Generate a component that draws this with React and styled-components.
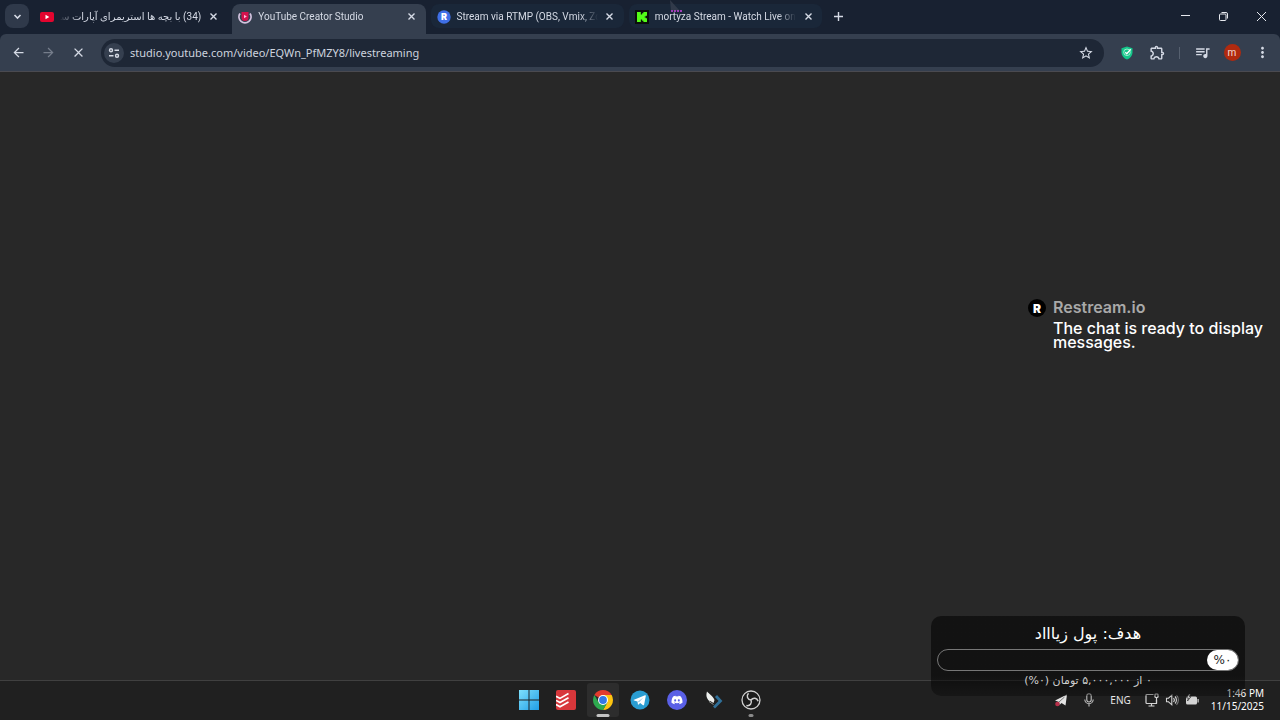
import styled, { createGlobalStyle, css } from 'styled-components'
import { FaDiscord } from 'react-icons/fa'
import {
  MdArrowBack,
  MdArrowForward,
  MdClose,
  MdMoreVert,
  MdOutlineExtension,
  MdOutlineQueueMusic,
  MdStarBorder,
} from 'react-icons/md'

const uiFont = "'Noto Sans', 'Open Sans', 'DejaVu Sans', sans-serif"
const tabFont = "Roboto, 'Noto Sans', 'DejaVu Sans', sans-serif"

const tabs = [
  { id: 'aparat', title: '(34) با بچه ها استریمرای آپارات سر', icon: YouTubeIcon, rtl: true },
  { id: 'studio', title: 'YouTube Creator Studio', icon: StudioIcon, active: true },
  { id: 'rtmp', title: 'Stream via RTMP (OBS, Vmix, Zo', icon: RestreamIcon, tinted: true },
  { id: 'kick', title: 'mortyza Stream - Watch Live on', icon: KickIcon, tinted: true },
]

const apps = [
  { name: 'Start', icon: StartIcon },
  { name: 'Todoist', icon: TodoistIcon },
  { name: 'Chrome', icon: ChromeIcon, state: 'focused' },
  { name: 'Telegram', icon: TelegramIcon },
  { name: 'Discord', icon: DiscordIcon },
  { name: 'Wing', icon: WingIcon },
  { name: 'OBS Studio', icon: ObsIcon, state: 'open' },
]

function App() {
  return (
    <>
      <GlobalStyle />
      <Desktop>
        <TabStrip>
          <SearchTabs aria-label="Search tabs">
            <ChevronIcon />
          </SearchTabs>
          <TabList>
            {tabs.map((tab) => (
              <BrowserTab key={tab.id} tab={tab} />
            ))}
          </TabList>
          <NewTab aria-label="New tab">
            <PlusIcon />
          </NewTab>
          <WindowControls>
            <WindowButton aria-label="Minimize">
              <svg width="11" height="11" viewBox="0 0 11 11"><path d="M1 4.500h9" stroke="currentColor" /></svg>
            </WindowButton>
            <WindowButton aria-label="Restore">
              <svg width="11" height="11" viewBox="0 0 11 11" fill="none" stroke="currentColor">
                <rect x="1.5" y="3" width="6.5" height="6.5" rx="1" />
                <path d="M3.5 1.5H8A1.5 1.5 0 0 1 9.5 3v4.5" />
              </svg>
            </WindowButton>
            <WindowButton aria-label="Close">
              <svg width="11" height="11" viewBox="0 0 11 11"><path d="M1 1l9 9M10 1l-9 9" stroke="currentColor" /></svg>
            </WindowButton>
          </WindowControls>
        </TabStrip>

        <Toolbar>
          <ToolButton aria-label="Back"><MdArrowBack size={15} /></ToolButton>
          <ToolButton aria-label="Forward" disabled><MdArrowForward size={15} /></ToolButton>
          <ToolButton aria-label="Stop"><MdClose size={15} /></ToolButton>
          <AddressBar>
            <SiteInfo aria-label="Site information">
              <TuneIcon />
            </SiteInfo>
            <Address
              aria-label="Address"
              spellCheck={false}
              defaultValue="studio.youtube.com/video/EQWn_PfMZY8/livestreaming"
            />
            <Bookmark aria-label="Bookmark this tab"><MdStarBorder size={16} /></Bookmark>
          </AddressBar>
          <Extensions>
            <ToolButton aria-label="Shield"><ShieldIcon /></ToolButton>
            <ToolButton aria-label="Extensions"><MdOutlineExtension size={17} /></ToolButton>
            <Divider />
            <ToolButton aria-label="Media controls"><MdOutlineQueueMusic size={17} /></ToolButton>
            <ToolButton aria-label="Profile"><Avatar>m</Avatar></ToolButton>
            <ToolButton aria-label="Menu"><MdMoreVert size={17} /></ToolButton>
          </Extensions>
        </Toolbar>

        <Page>
          <Chat>
            <ChatLogo>R</ChatLogo>
            <div>
              <ChatAuthor>Restream.io</ChatAuthor>
              <ChatText>The chat is ready to display messages.</ChatText>
            </div>
          </Chat>
        </Page>

        <Taskbar>
          <Apps>
            {apps.map(({ name, icon: Icon, state }) => (
              <AppButton key={name} aria-label={name} $state={state}>
                <Icon />
              </AppButton>
            ))}
          </Apps>
          <Tray>
            <TrayButton aria-label="Telegram"><TrayPlaneIcon /></TrayButton>
            <TrayButton aria-label="Microphone"><MicIcon /></TrayButton>
            <TrayButton aria-label="Input language">ENG</TrayButton>
            <QuickSettings aria-label="Quick settings">
              <NetworkIcon />
              <SpeakerIcon />
              <BatteryIcon />
            </QuickSettings>
            <Clock>
              <span>1:46 PM</span>
              <span>11/15/2025</span>
            </Clock>
          </Tray>
        </Taskbar>

        <Goal dir="rtl">
          <GoalTitle>هدف: پول زیاااد</GoalTitle>
          <GoalTrack>
            <GoalFill>%۰</GoalFill>
          </GoalTrack>
          <GoalAmount>۰ از ۵,۰۰۰,۰۰۰ تومان (۰%)</GoalAmount>
        </Goal>

        <Pointer width="16" height="20" viewBox="0 0 16 20" aria-hidden="true">
          <path d="M3 0l10 11H4z" fill="#3a4250" opacity=".75" />
          <path d="M4 11h11" stroke="#a03cb8" strokeWidth="2" strokeDasharray="2 1" />
        </Pointer>
      </Desktop>
    </>
  )
}

function BrowserTab({ tab }) {
  const Icon = tab.icon
  return (
    <Tab $active={tab.active} $tinted={tab.tinted}>
      <TabLink href="#">
        <Icon />
        <TabTitle $rtl={tab.rtl} dir={tab.rtl ? 'rtl' : 'ltr'}>{tab.title}</TabTitle>
      </TabLink>
      <CloseTab aria-label="Close tab">
        <svg width="9" height="9" viewBox="0 0 9 9"><path d="M1.500 1.500l6 6M7.500 1.500l-6 6" stroke="currentColor" strokeWidth="1.4" /></svg>
      </CloseTab>
    </Tab>
  )
}

function ChevronIcon() {
  return (
    <svg width="9" height="9" viewBox="0 0 9 9" fill="none">
      <path d="M1.5 3l3 3 3-3" stroke="currentColor" strokeWidth="1.6" />
    </svg>
  )
}

function PlusIcon() {
  return (
    <svg width="11" height="11" viewBox="0 0 11 11">
      <path d="M5.5 1v9M1 5.5h9" stroke="currentColor" strokeWidth="1.4" />
    </svg>
  )
}

function YouTubeIcon() {
  return (
    <svg width="14" height="14" viewBox="0 0 14 14">
      <rect y="2" width="14" height="10" rx="2" fill="#e3052f" />
      <path d="M5.5 4.8v4.4L9.3 7z" fill="#fff" />
    </svg>
  )
}

function StudioIcon() {
  return (
    <svg width="14" height="14" viewBox="0 0 14 14">
      <path d="M3.500 2h7v5.500a3.500 3.500 0 0 1-7 0z" fill="#d3124c" />
      <path d="M6 4.800v3.400L8.800 6.500z" fill="#fbd" />
      <path d="M2 3.500A6 6 0 1 0 12 3.500" fill="none" stroke="#d3c3df" strokeWidth="1.800" />
    </svg>
  )
}

function RestreamIcon() {
  return (
    <svg width="14" height="14" viewBox="0 0 14 14">
      <circle cx="7" cy="7" r="6.700" fill="#3f6fe6" />
      <text x="7" y="10.200" textAnchor="middle" fontFamily="Inter, sans-serif" fontSize="9" fontWeight="900" fill="#fff">R</text>
    </svg>
  )
}

function KickIcon() {
  return (
    <svg width="14" height="14" viewBox="0 0 14 14">
      <rect width="14" height="14" fill="#0b0f0c" />
      <path d="M2 2h3.800v2.400h1.300V3.200h1.300V2H12v3.700h-1.200v.8H9.700v1h1.100v.8H12V12H8.400v-1.200H7.100V9.600H5.800V12H2z" fill="#53fc18" />
    </svg>
  )
}

function TuneIcon() {
  return (
    <svg width="12" height="12" viewBox="0 0 12 12" fill="none" stroke="currentColor" strokeWidth="1.400">
      <circle cx="3" cy="3.200" r="1.500" />
      <path d="M6.500 3.200H11M1 8.800h4.500" />
      <circle cx="9" cy="8.800" r="1.500" />
    </svg>
  )
}

function ShieldIcon() {
  return (
    <svg width="14" height="14" viewBox="0 0 14 14">
      <path d="M7 .5l5.500 1.700v4.300c0 3.400-2.300 5.800-5.500 7-3.200-1.200-5.500-3.600-5.500-7V2.200z" fill="#14c68a" />
      <circle cx="7" cy="6.300" r="3.300" fill="none" stroke="#a9f0d5" strokeWidth=".9" />
      <path d="M5.300 6.200l1.500 1.600 3.900-4.500" fill="none" stroke="#fff" strokeWidth="1.300" />
    </svg>
  )
}

function StartIcon() {
  return (
    <svg width="20" height="20" viewBox="0 0 20 20">
      <defs>
        <linearGradient id="start" x1="0" y1="0" x2="1" y2="1">
          <stop stopColor="#7fe0fb" />
          <stop offset="1" stopColor="#1f9de6" />
        </linearGradient>
      </defs>
      <path d="M0 0h9.500v9.500H0zM10.500 0H20v9.500h-9.500zM0 10.500h9.500V20H0zM10.500 10.500H20V20h-9.500z" fill="url(#start)" />
    </svg>
  )
}

function TodoistIcon() {
  return (
    <svg width="20" height="20" viewBox="0 0 20 20">
      <rect width="20" height="20" rx="2" fill="#d8373b" />
      <path d="M0 6.200l4 2.200 8.500-4.800M0 10.400l4 2.200 8.500-4.800M0 14.600l4 2.200 8.500-4.800" fill="none" stroke="#fff" strokeWidth="1.700" />
    </svg>
  )
}

function ChromeIcon() {
  return (
    <svg width="20" height="20" viewBox="0 0 20 20">
      <path d="M10 10L1.340 5A10 10 0 0 1 18.660 5z" fill="#e33b2e" />
      <path d="M10 5h8.660A10 10 0 0 1 10 20l4.330-7.500z" fill="#fdc411" />
      <path d="M1.340 5A10 10 0 0 0 10 20l4.330-7.500H5.670z" fill="#2da94f" />
      <circle cx="10" cy="10" r="5" fill="#fff" />
      <circle cx="10" cy="10" r="3.900" fill="#3478e5" />
    </svg>
  )
}

function TelegramIcon() {
  return (
    <svg width="20" height="20" viewBox="0 0 20 20">
      <circle cx="10" cy="10" r="9.500" fill="#2a9dd2" />
      <path d="M4 9.800l11-4.500c.6-.2 1 .1.800.8l-1.700 8.600c-.1.600-.6.800-1.100.5l-2.900-2.200-1.600 1.500c-.3.300-.6.200-.6-.2l-.4-2.900-3.400-1c-.6-.2-.6-.5-.1-.6z" fill="#fff" />
      <path d="M7.800 11.600l5.600-4.100-4.400 4.900z" fill="#9ccde6" />
    </svg>
  )
}

function DiscordIcon() {
  return (
    <svg width="20" height="20" viewBox="0 0 20 20">
      <circle cx="10" cy="10" r="10" fill="#5a60e6" />
      <FaDiscord x="4" y="4" size={12} color="#fff" />
    </svg>
  )
}

function WingIcon() {
  return (
    <svg width="20" height="20" viewBox="0 0 20 20">
      <path d="M12 6l4.500 5-6.500 6.500" fill="none" stroke="#2f6f98" strokeWidth="2.800" />
      <path d="M3 1.500c1.500 2 6 4.500 7.500 8.500L9.500 13 5.500 10.500 6.500 12C3 9.500 1.500 6 3 1.500z" fill="#eef0ee" />
      <path d="M5 11.500l4.500 3" stroke="#8d9290" />
    </svg>
  )
}

function ObsIcon() {
  return (
    <svg width="20" height="20" viewBox="0 0 20 20" fill="none" stroke="#d0d0d0">
      <circle cx="10" cy="10" r="9" fill="#1b1b1b" strokeWidth="1.300" />
      <g strokeWidth="1.500">
        <path d="M10 10C6.500 9.500 5 6 7.500 3.200" />
        <path d="M10 10C6.500 9.500 5 6 7.500 3.200" transform="rotate(120 10 10)" />
        <path d="M10 10C6.500 9.500 5 6 7.500 3.200" transform="rotate(240 10 10)" />
      </g>
    </svg>
  )
}

function TrayPlaneIcon() {
  return (
    <svg width="14" height="14" viewBox="0 0 14 14">
      <path d="M1 7.500L13 1.500l-1.500 11-4-2.500-2 2-.5-3z" fill="#e4e4e4" />
      <path d="M5 9l5.500-5" stroke="#777" />
      <circle cx="3.500" cy="11" r="2.300" fill="#b8304a" />
    </svg>
  )
}

function MicIcon() {
  return (
    <svg width="14" height="14" viewBox="0 0 14 14" fill="none" stroke="#c0c0c0" strokeWidth="1.100">
      <rect x="4.800" y=".8" width="4.400" height="8.200" rx="2.200" />
      <path d="M2.800 6.500a4.200 4.200 0 0 0 8.400 0M7 10.800V13.500" />
    </svg>
  )
}

function NetworkIcon() {
  return (
    <svg width="14" height="14" viewBox="0 0 14 14" fill="none" stroke="#d4d4d4" strokeWidth="1.200">
      <path d="M8.500 1.500H2A1 1 0 0 0 1 2.500v7a1 1 0 0 0 1 1h9.500V7M3.500 13h6M6.500 10.500V13" />
      <rect x="10" y="1" width="3" height="3.500" rx=".8" />
      <path d="M11.500 4.500V10" />
    </svg>
  )
}

function SpeakerIcon() {
  return (
    <svg width="14" height="14" viewBox="0 0 14 14" fill="none" stroke="#d4d4d4" strokeWidth="1.100">
      <path d="M1.500 5.200h2L6.800 2.200v9.600L3.500 8.800h-2z" />
      <path d="M8.500 5a3 3 0 0 1 0 4M10 3.500a5 5 0 0 1 0 7" />
      <path d="M11.500 2.200a7 7 0 0 1 0 9.600" opacity=".5" />
    </svg>
  )
}

function BatteryIcon() {
  return (
    <svg width="14" height="14" viewBox="0 0 14 14">
      <rect x="1" y="3.500" width="11" height="8" rx="1.500" fill="#d4d4d4" />
      <path d="M12.500 6h1.200v3.500h-1.200z" fill="#d4d4d4" />
      <path d="M3.800 1L1.500 5h2L2.500 8l3.500-4.300H4.200L5.800 1z" fill="#d4d4d4" stroke="#222" strokeWidth=".7" />
    </svg>
  )
}

const GlobalStyle = createGlobalStyle`
  * {
    box-sizing: border-box;
  }
  body {
    margin: 0;
    background: #282828;
    font-family: ${uiFont};
  }
  button {
    padding: 0;
    border: 0;
    background: none;
    color: inherit;
    font: inherit;
  }
  svg {
    display: block;
    flex-shrink: 0;
  }
`

const Desktop = styled.div`
  position: relative;
  display: flex;
  flex-direction: column;
  min-height: 100vh;
  overflow: hidden;
  background: #182131;
`

const TabStrip = styled.header`
  display: flex;
  align-items: flex-start;
  height: 34px;
  padding: 4px 0 0 5px;
  color: #d5dae5;
`

const SearchTabs = styled.button`
  display: grid;
  place-items: center;
  flex-shrink: 0;
  width: 24px;
  height: 24px;
  margin-right: 5px;
  border-radius: 8px;
  background: #2f394a;
`

const TabList = styled.nav`
  display: flex;
  flex: 0 1 788px;
  gap: 5px;
  min-width: 0;
`

const Tab = styled.div`
  display: flex;
  flex: 1;
  align-items: flex-start;
  min-width: 0;
  height: ${({ $active }) => ($active ? '30px' : '24px')};
  padding: 0 5px 0 6px;
  border-radius: ${({ $active }) => ($active ? '8px 8px 0 0' : '8px')};
  background: ${({ $active, $tinted }) => ($active ? '#353f4f' : $tinted ? '#1a2739' : 'none')};
`

const TabLink = styled.a`
  display: flex;
  flex: 1;
  align-items: center;
  gap: 6px;
  min-width: 0;
  height: 25px;
  color: #d5dae5;
  text-decoration: none;
`

const TabTitle = styled.span`
  flex: 1;
  overflow: hidden;
  white-space: nowrap;
  font-family: ${tabFont};
  font-size: 10px;
  line-height: 20px;
  ${({ $rtl }) => css`
    mask-image: linear-gradient(to ${$rtl ? 'left' : 'right'}, #000 calc(100% - 18px), transparent);
  `}
`

const CloseTab = styled.button`
  display: grid;
  place-items: center;
  width: 18px;
  height: 25px;
  margin-left: 3px;
`

const NewTab = styled.button`
  display: grid;
  place-items: center;
  width: 24px;
  height: 25px;
  margin-left: 4px;
`

const WindowControls = styled.div`
  display: flex;
  margin-left: auto;
`

const WindowButton = styled.button`
  display: grid;
  place-items: center;
  width: 38px;
  height: 25px;
  color: #e6e9ef;
`

const Toolbar = styled.div`
  display: flex;
  align-items: center;
  height: 38px;
  padding: 0 3px;
  border-bottom: 1px solid #4a4a50;
  border-radius: 6px 6px 0 0;
  background: #353f4f;
  color: #d5dae5;
`

const ToolButton = styled.button`
  display: grid;
  place-items: center;
  width: 30px;
  height: 28px;
  &:disabled {
    opacity: 0.4;
  }
`

const AddressBar = styled.div`
  display: flex;
  flex: 1;
  align-items: center;
  height: 28px;
  margin-left: 8px;
  padding: 0 8px 0 3px;
  border-radius: 14px;
  background: #1e2736;
`

const SiteInfo = styled.button`
  display: grid;
  place-items: center;
  width: 20px;
  height: 20px;
  border-radius: 10px;
  background: #353f4f;
`

const Address = styled.input`
  flex: 1;
  min-width: 0;
  height: 24px;
  padding: 0;
  margin-left: 6px;
  border: 0;
  outline: 0;
  background: none;
  color: #cdd3df;
  font-family: ${uiFont};
  font-size: 11px;
`

const Bookmark = styled.button`
  display: grid;
  place-items: center;
  width: 20px;
  height: 24px;
`

const Extensions = styled.div`
  display: flex;
  align-items: center;
  margin-left: 8px;
`

const Divider = styled.span`
  width: 1px;
  height: 12px;
  margin: 0 7px;
  background: #56606f;
`

const Avatar = styled.span`
  display: grid;
  place-items: center;
  width: 17px;
  height: 17px;
  border-radius: 50%;
  background: #b02a0f;
  color: #f6dcd5;
  font-family: Roboto, sans-serif;
  font-size: 10px;
  line-height: 16px;
`

const Page = styled.main`
  flex: 1;
  background: #282828;
`

/* stream widgets float over the desktop */
const Chat = styled.section`
  position: absolute;
  top: 297px;
  right: 4px;
  display: flex;
  gap: 7px;
  width: 248px;
  font-family: Inter, Roboto, sans-serif;
  font-weight: 500;
`

const ChatLogo = styled.span`
  display: grid;
  place-items: center;
  flex-shrink: 0;
  width: 18px;
  height: 18px;
  margin-top: 2px;
  border-radius: 50%;
  background: #000;
  color: #fff;
  font-family: Inter, sans-serif;
  font-size: 12px;
  font-weight: 900;
`

const ChatAuthor = styled.div`
  color: #a9a9a9;
  font-size: 16px;
  font-weight: 600;
  line-height: 20px;
`

const ChatText = styled.p`
  margin: 4px 0 0;
  color: #fff;
  font-size: 16px;
  line-height: 14px;
`

const Taskbar = styled.footer`
  display: grid;
  grid-template-columns: 1fr auto 1fr;
  align-items: center;
  height: 40px;
  padding-bottom: 2px;
  border-top: 1px solid #404040;
  background: #202020;
`

const Apps = styled.nav`
  display: flex;
  grid-column: 2;
  gap: 5px;
`

const AppButton = styled.button`
  position: relative;
  display: grid;
  place-items: center;
  width: 32px;
  height: 34px;
  border-radius: 3px;
  background: ${({ $state }) => ($state === 'focused' ? '#2d2d2d' : 'none')};
  ${({ $state }) =>
    $state &&
    css`
      &::after {
        content: '';
        position: absolute;
        bottom: 0;
        left: 50%;
        width: ${$state === 'focused' ? '13px' : '5px'};
        height: 3px;
        border-radius: 2px;
        background: ${$state === 'focused' ? '#c4c4c4' : '#8a8a8a'};
        transform: translateX(-50%);
      }
    `}
`

const Tray = styled.div`
  display: flex;
  align-items: center;
  justify-content: flex-end;
  padding-right: 16px;
  color: #e6e6e6;
  font-size: 10px;
`

const TrayButton = styled.button`
  display: grid;
  place-items: center;
  min-width: 14px;
  height: 28px;
  margin-right: 14px;
`

const QuickSettings = styled.button`
  display: flex;
  align-items: center;
  gap: 6px;
  height: 28px;
  margin-right: 12px;
`

const Clock = styled.button`
  display: flex;
  flex-direction: column;
  align-items: flex-end;
  color: #fff;
  line-height: 13px;
`

const Goal = styled.section`
  position: absolute;
  right: 35px;
  bottom: 24px;
  width: 314px;
  padding: 6px;
  border-radius: 10px;
  background: linear-gradient(rgba(0, 0, 0, 0.55) 75%, rgba(0, 0, 0, 0.3));
  color: #fff;
  text-align: center;
`

const GoalTitle = styled.h2`
  margin: 0 0 3px;
  font-family: 'DejaVu Sans', sans-serif;
  font-size: 16px;
  font-weight: 400;
  line-height: 24px;
`

const GoalTrack = styled.div`
  display: flex;
  height: 22px;
  border: 1px solid #777;
  border-radius: 11px;
`

const GoalFill = styled.span`
  width: 31px;
  border-radius: 10px;
  background: #fff;
  color: #222;
  font-family: 'DejaVu Sans', sans-serif;
  font-size: 12px;
  line-height: 20px;
`

const GoalAmount = styled.p`
  margin: 1px 0 0;
  color: #d0d0d0;
  font-family: 'DejaVu Sans', sans-serif;
  font-size: 11px;
  line-height: 18px;
`

const Pointer = styled.svg`
  position: absolute;
  top: 0;
  left: 667px;
  pointer-events: none;
`

export default App
